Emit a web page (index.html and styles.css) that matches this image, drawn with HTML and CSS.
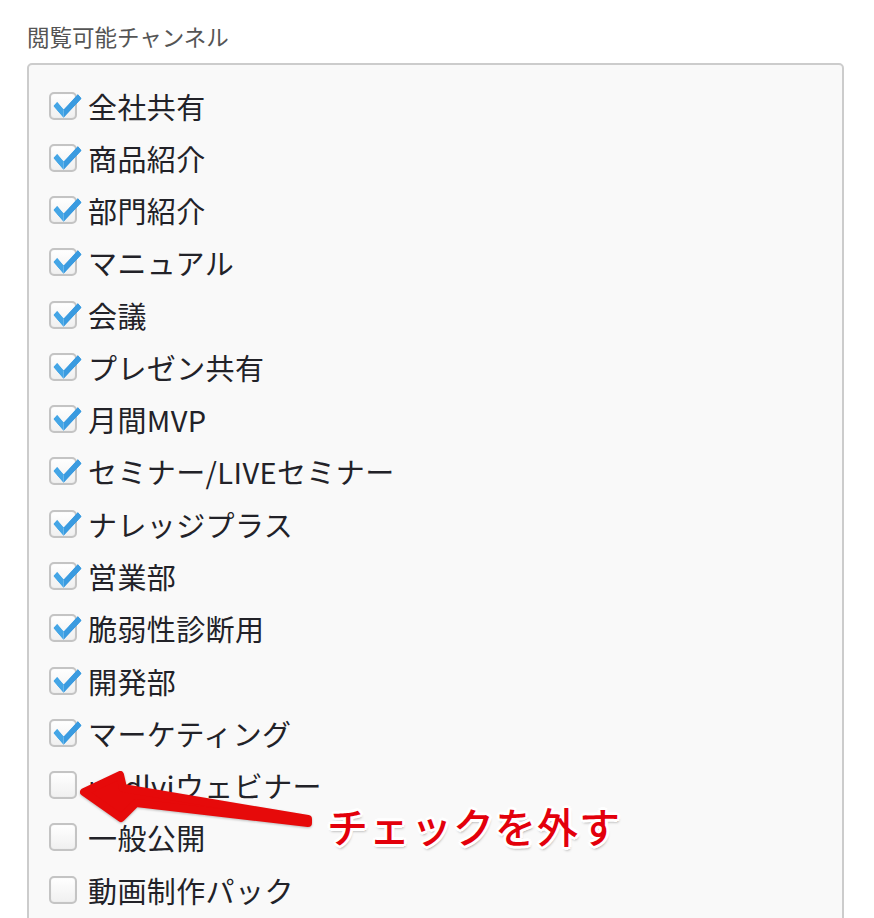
FILE: index.html
```html
<!DOCTYPE html>
<html lang="ja">
<head>
<meta charset="utf-8">
<link rel="stylesheet" href="styles.css">
</head>
<body>
<div class="page">
  <div class="field-label">閲覧可能チャンネル</div>
  <div class="channel-box">
    <label class="row"><span class="cb on"></span><span class="txt">全社共有</span></label>
    <label class="row"><span class="cb on"></span><span class="txt">商品紹介</span></label>
    <label class="row"><span class="cb on"></span><span class="txt">部門紹介</span></label>
    <label class="row"><span class="cb on"></span><span class="txt">マニュアル</span></label>
    <label class="row"><span class="cb on"></span><span class="txt">会議</span></label>
    <label class="row"><span class="cb on"></span><span class="txt">プレゼン共有</span></label>
    <label class="row"><span class="cb on"></span><span class="txt">月間MVP</span></label>
    <label class="row"><span class="cb on"></span><span class="txt">セミナー/LIVEセミナー</span></label>
    <label class="row"><span class="cb on"></span><span class="txt">ナレッジプラス</span></label>
    <label class="row"><span class="cb on"></span><span class="txt">営業部</span></label>
    <label class="row"><span class="cb on"></span><span class="txt">脆弱性診断用</span></label>
    <label class="row"><span class="cb on"></span><span class="txt">開発部</span></label>
    <label class="row"><span class="cb on"></span><span class="txt">マーケティング</span></label>
    <label class="row"><span class="cb"></span><span class="txt">nodlviウェビナー</span></label>
    <label class="row"><span class="cb"></span><span class="txt">一般公開</span></label>
    <label class="row"><span class="cb"></span><span class="txt">動画制作パック</span></label>
  </div>
</div>

<svg class="arrow" width="874" height="918" viewBox="0 0 874 918">
  <polygon points="84,792 120,775 123,788 308,819 308,823 136,803 121,818"
           fill="#e60a0a" stroke="#e60a0a" stroke-width="8" stroke-linejoin="round"/>
</svg>
<div class="note">チェックを外す</div>
</body>
</html>
```

FILE: styles.css
```css
html, body {
  margin: 0;
  padding: 0;
  background: #ffffff;
}
body {
  width: 874px;
  height: 918px;
  overflow: hidden;
  position: relative;
  font-family: "Noto Sans CJK JP", "Noto Sans", sans-serif;
}
.page {
  padding: 21px 30px 0 27px;
}
.field-label {
  font-size: 22.5px;
  line-height: 30px;
  color: #555555;
  margin-bottom: 12px;
}
.channel-box {
  border: 2px solid #cccccc;
  border-radius: 5px;
  background: #f9f9f9;
  padding: 15px 20px 20px 20px;
  height: 900px;
  box-sizing: border-box;
}
.row {
  display: flex;
  align-items: center;
  height: 52.27px;
}
.cb {
  width: 28px;
  height: 28px;
  box-sizing: border-box;
  border: 2px solid #c4c4c4;
  border-radius: 5px;
  background: linear-gradient(#ffffff, #f0f0f0);
  box-shadow: inset 0 0 1px rgba(0,0,0,0.12);
  position: relative;
  flex: none;
  margin-right: 11px;
  margin-top: -1px;
}
.cb.on::after {
  content: "";
  position: absolute;
  width: 21px;
  height: 10px;
  border-left: 6px solid #45a6e6;
  border-bottom: 6px solid #3a9be0;
  transform: rotate(-47deg) skewX(-6deg);
  transform-origin: 0 0;
  left: 2px;
  top: 12px;
  border-radius: 1px;
}
.txt {
  font-size: 29px;
  color: #222228;
  line-height: 1;
  white-space: nowrap;
  letter-spacing: 0.4px;
}
.arrow {
  position: absolute;
  left: 0;
  top: 0;
  pointer-events: none;
  filter: drop-shadow(0 1px 1px rgba(0,0,0,0.25));
}
.note {
  position: absolute;
  left: 327px;
  top: 797px;
  font-size: 41px;
  line-height: 56px;
  font-weight: 500;
  letter-spacing: 1px;
  color: #e3000b;
  white-space: nowrap;
  text-shadow:
    2px 0 0 #fff, -2px 0 0 #fff, 0 2px 0 #fff, 0 -2px 0 #fff,
    2px 2px 0 #fff, -2px -2px 0 #fff, 2px -2px 0 #fff, -2px 2px 0 #fff,
    3px 0 0 #fff, -3px 0 0 #fff, 0 3px 0 #fff, 0 -3px 0 #fff,
    1px 3px 3px rgba(0,0,0,0.45);
}
```
